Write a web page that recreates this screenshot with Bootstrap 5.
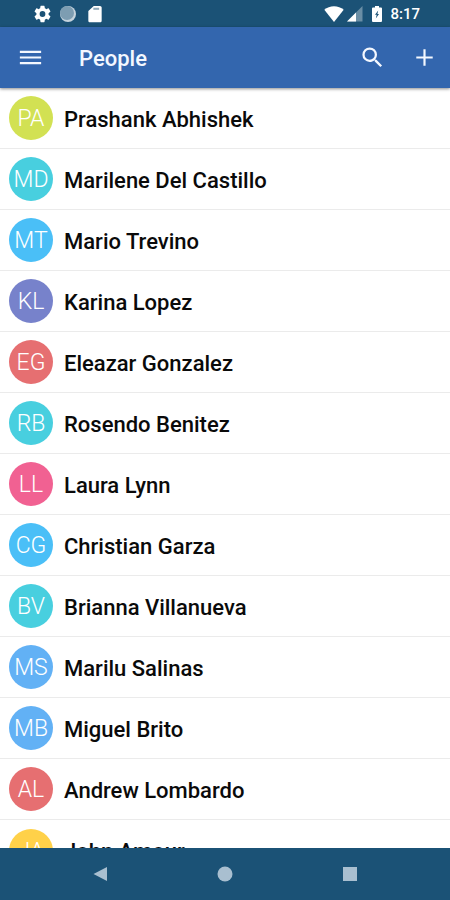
<!DOCTYPE html>
<html lang="en">
<head>
<meta charset="utf-8">
<meta name="viewport" content="width=device-width, initial-scale=1">
<title>People</title>
<link href="https://cdn.jsdelivr.net/npm/bootstrap@5.3.0/dist/css/bootstrap.min.css" rel="stylesheet">
<style>
  body { font-family: Roboto, "Liberation Sans", sans-serif; }
  svg { display: block; fill: currentColor; }
  .system-bar { background: #1b5276; color: #fff; }
  .status { height: 27px; padding: 0 30px 0 34px; }
  .signals { gap: 3px; }
  .clock { font-size: 15px; font-weight: 500; line-height: 20px; margin-left: 7px; padding-top: 1px; }
  .app-bar { background: #3366ae; color: #f4f8ff; height: 61px; padding: 0 11px 0 16px; box-shadow: 0 1px 3px rgba(0, 0, 0, .45); z-index: 1; }
  .app-bar h1 { font-size: 22px; font-weight: 500; line-height: 28px; margin-left: 34px; padding-top: 2px; }
  .bar-btn { color: inherit; background: none; border: 0; padding: 0; }
  .people .list-group-item { height: 61px; padding: 0 9px; gap: 11px; border-color: #ebebeb; color: #0a0a0a; font-size: 22px; font-weight: 500; line-height: 28px; }
  .person { padding-top: 3px; }
  .avatar { width: 44px; height: 44px; padding-top: 2px; color: #fff; font-size: 23px; font-weight: 300; }
  .lime { background: #d2e153; }
  .teal { background: #48cfdf; }
  .sky { background: #4abff7; }
  .indigo { background: #7782cb; }
  .red { background: #e66f71; }
  .pink { background: #f16192; }
  .blue { background: #62b1f5; }
  .amber { background: #ffd149; }
  .nav-keys { height: 52px; padding: 0 38px; color: #a9bfd0; }
</style>
</head>
<body class="vh-100 d-flex flex-column overflow-hidden bg-white">
<div class="system-bar status d-flex align-items-center flex-shrink-0">
  <svg width="17" height="18" viewBox="2 2 20 20" role="img" aria-label="Settings"><path d="M19.14 12.94c.04-.3.06-.61.06-.94s-.02-.64-.07-.94l2.03-1.58a.49.49 0 0 0 .12-.61l-1.92-3.32a.49.49 0 0 0-.59-.22l-2.39.96a7 7 0 0 0-1.62-.94l-.36-2.54a.48.48 0 0 0-.48-.41h-3.84a.48.48 0 0 0-.47.41l-.36 2.54c-.59.24-1.13.57-1.62.94l-2.39-.96a.48.48 0 0 0-.59.22L2.74 8.87a.48.48 0 0 0 .12.61l2.03 1.58c-.05.3-.09.63-.09.94s.02.64.07.94l-2.03 1.58a.49.49 0 0 0-.12.61l1.92 3.32c.12.22.37.29.59.22l2.39-.96c.5.38 1.03.7 1.62.94l.36 2.54c.05.24.24.41.48.41h3.84c.24 0 .44-.17.47-.41l.36-2.54a7 7 0 0 0 1.62-.94l2.39.96c.22.08.47 0 .59-.22l1.92-3.32a.48.48 0 0 0-.12-.61zM12 15.4a3.4 3.4 0 1 1 0-6.8 3.4 3.4 0 0 1 0 6.8"/></svg>
  <svg class="ms-2" width="18" height="18" viewBox="0 0 18 18" role="img" aria-label="Syncing"><circle cx="9" cy="9" r="8" fill="#c5d3dd"/><circle cx="8" cy="8" r="7" fill="#7d9db2"/></svg>
  <svg class="ms-2" width="20" height="20" viewBox="0 0 24 24" role="img" aria-label="Memory card"><path d="M18 2.300h-7.500L4 8.500V20c0 1.100.9 2 2 2h12c1.100 0 2-.9 2-2V4.300c0-1.100-.9-2-2-2"/><path d="M10 4.500h7v2.500h-7z" fill="#8fa9ba"/></svg>
  <div class="signals d-flex align-items-center ms-auto">
    <svg width="20" height="16" viewBox="0 0 20 16" role="img" aria-label="Wi-Fi"><path d="M10 16 .3 3.800C3 1.500 6.300.3 10 .3s7 1.200 9.700 3.500z"/></svg>
    <svg width="16" height="16" viewBox="0 0 16 16" role="img" aria-label="Signal"><path d="M0 15.500 15.500 0v15.500z" opacity=".35"/><path d="M0 15.500 9 6.500v9z"/></svg>
  </div>
  <svg class="ms-2" width="12" height="18" viewBox="0 0 12 18" role="img" aria-label="Battery charging"><path fill-rule="evenodd" d="M4 1h4v1.500h2q1 0 1 1V16q0 1-1 1H2q-1 0-1-1V3.500q0-1 1-1h2zm3.200 4.500L4 9.800h1.700L4.800 13.500 8 9H6.400z"/></svg>
  <span class="clock">8:17</span>
</div>
<header class="app-bar d-flex align-items-center flex-shrink-0 position-relative">
  <button class="bar-btn" type="button" aria-label="Menu"><svg width="29" height="29" viewBox="0 0 24 24"><path d="M3.200 17.500h17.600v-1.800H3.200zm0-4.600h17.600v-1.800H3.200zm0-6.400v1.800h17.600V6.500z"/></svg></button>
  <h1 class="mb-0">People</h1>
  <button class="bar-btn ms-auto" type="button" aria-label="Search"><svg width="27" height="27" viewBox="0 0 24 24"><path d="M15.500 14h-.79l-.28-.27A6.470 6.470 0 0 0 16 9.500 6.500 6.500 0 1 0 9.500 16c1.610 0 3.090-.59 4.230-1.570l.27.28v.79l5 4.990L20.490 19zm-6 0a4.500 4.500 0 1 1 0-9 4.500 4.500 0 0 1 0 9"/></svg></button>
  <button class="bar-btn ms-4" type="button" aria-label="Add person"><svg width="29" height="29" viewBox="0 0 24 24"><path d="M18.800 12.900h-5.900v5.900h-1.800v-5.900H5.200v-1.800h5.900V5.200h1.800v5.900h5.900z"/></svg></button>
</header>
<main class="people list-group list-group-flush flex-grow-1 overflow-hidden">
  <a href="#" class="list-group-item d-flex align-items-center flex-shrink-0"><span class="avatar lime rounded-circle d-flex align-items-center justify-content-center">PA</span><span class="person">Prashank Abhishek</span></a>
  <a href="#" class="list-group-item d-flex align-items-center flex-shrink-0"><span class="avatar teal rounded-circle d-flex align-items-center justify-content-center">MD</span><span class="person">Marilene Del Castillo</span></a>
  <a href="#" class="list-group-item d-flex align-items-center flex-shrink-0"><span class="avatar sky rounded-circle d-flex align-items-center justify-content-center">MT</span><span class="person">Mario Trevino</span></a>
  <a href="#" class="list-group-item d-flex align-items-center flex-shrink-0"><span class="avatar indigo rounded-circle d-flex align-items-center justify-content-center">KL</span><span class="person">Karina Lopez</span></a>
  <a href="#" class="list-group-item d-flex align-items-center flex-shrink-0"><span class="avatar red rounded-circle d-flex align-items-center justify-content-center">EG</span><span class="person">Eleazar Gonzalez</span></a>
  <a href="#" class="list-group-item d-flex align-items-center flex-shrink-0"><span class="avatar teal rounded-circle d-flex align-items-center justify-content-center">RB</span><span class="person">Rosendo Benitez</span></a>
  <a href="#" class="list-group-item d-flex align-items-center flex-shrink-0"><span class="avatar pink rounded-circle d-flex align-items-center justify-content-center">LL</span><span class="person">Laura Lynn</span></a>
  <a href="#" class="list-group-item d-flex align-items-center flex-shrink-0"><span class="avatar sky rounded-circle d-flex align-items-center justify-content-center">CG</span><span class="person">Christian Garza</span></a>
  <a href="#" class="list-group-item d-flex align-items-center flex-shrink-0"><span class="avatar teal rounded-circle d-flex align-items-center justify-content-center">BV</span><span class="person">Brianna Villanueva</span></a>
  <a href="#" class="list-group-item d-flex align-items-center flex-shrink-0"><span class="avatar blue rounded-circle d-flex align-items-center justify-content-center">MS</span><span class="person">Marilu Salinas</span></a>
  <a href="#" class="list-group-item d-flex align-items-center flex-shrink-0"><span class="avatar blue rounded-circle d-flex align-items-center justify-content-center">MB</span><span class="person">Miguel Brito</span></a>
  <a href="#" class="list-group-item d-flex align-items-center flex-shrink-0"><span class="avatar red rounded-circle d-flex align-items-center justify-content-center">AL</span><span class="person">Andrew Lombardo</span></a>
  <a href="#" class="list-group-item d-flex align-items-center flex-shrink-0"><span class="avatar amber rounded-circle d-flex align-items-center justify-content-center">JA</span><span class="person">John Amour</span></a>
</main>
<nav class="system-bar nav-keys d-flex flex-shrink-0" aria-label="System">
  <button class="bar-btn flex-fill d-flex align-items-center justify-content-center" type="button" aria-label="Back"><svg width="16" height="16" viewBox="0 0 16 16"><path d="M15 1v14L1.500 8z"/></svg></button>
  <button class="bar-btn flex-fill d-flex align-items-center justify-content-center" type="button" aria-label="Home"><svg width="16" height="16" viewBox="0 0 16 16"><circle cx="8" cy="8" r="7.500"/></svg></button>
  <button class="bar-btn flex-fill d-flex align-items-center justify-content-center" type="button" aria-label="Recent apps"><svg width="16" height="16" viewBox="0 0 16 16"><path d="M1 1h14v14H1z"/></svg></button>
</nav>
<script src="https://cdn.jsdelivr.net/npm/bootstrap@5.3.0/dist/js/bootstrap.bundle.min.js"></script>
</body>
</html>
